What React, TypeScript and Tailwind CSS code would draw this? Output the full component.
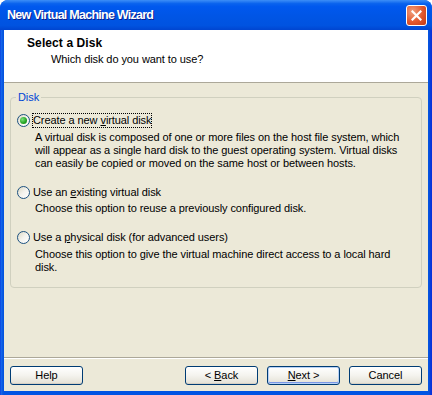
import React from "react";

const U = ({ children }: { children: React.ReactNode }) => (
  <span className="underline underline-offset-[1px]">{children}</span>
);

function Radio({ checked }: { checked?: boolean }) {
  return (
    <span className="w-[13px] h-[13px] shrink-0 rounded-full border border-[#1C5180] bg-gradient-to-br from-[#DCD9C5] via-[#F4F3EE] to-white flex items-center justify-center">
      {checked && (
        <span className="w-[7px] h-[7px] rounded-full bg-[radial-gradient(circle_at_35%_35%,#7BE07B,#21A121_60%,#1A8A1A)]" />
      )}
    </span>
  );
}

function Btn({ children, def }: { children: React.ReactNode; def?: boolean }) {
  return (
    <div
      className={
        "w-[73px] h-[19px] rounded-[3px] border border-[#003C74] flex items-center justify-center text-[11px] text-black bg-gradient-to-b from-white via-[#F4F3EE] to-[#E3E0D4] " +
        (def ? "shadow-[inset_0_0_0_1px_#B7D1F6,inset_0_-1px_0_1px_#7A97E6]" : "shadow-[inset_0_-1px_0_0_#D6D0C5]")
      }
    >
      <span className="whitespace-pre">{children}</span>
    </div>
  );
}

export default function App() {
  return (
    <div
      className="w-[432px] h-[395px] flex flex-col rounded-t-[8px] overflow-hidden bg-[#0054E3]"
      style={{ fontFamily: '"Liberation Sans", Arial, sans-serif' }}
    >
      {/* Title bar */}
      <div className="h-[30px] shrink-0 relative flex items-center bg-[linear-gradient(180deg,#3D8EF7_0%,#0A63EE_12%,#0058EE_22%,#0055E5_55%,#0053E0_85%,#0045D0_100%)]">
        <span className="ml-[7px] text-white font-bold text-[12.5px] [text-shadow:1px_1px_0_#0A1E8C] tracking-[-0.75px]">
          New Virtual Machine Wizard
        </span>
        <div className="absolute right-[5px] top-[5px] w-[21px] h-[21px] rounded-[3px] border border-white bg-[radial-gradient(circle_at_30%_30%,#F0A07E,#E2572D_55%,#C23A15)] flex items-center justify-center">
          <svg width="11" height="11" viewBox="0 0 11 11">
            <path d="M1.5 1.5 L9.5 9.5 M9.5 1.5 L1.5 9.5" stroke="white" strokeWidth="2.2" strokeLinecap="square" />
          </svg>
        </div>
      </div>

      {/* Frame */}
      <div className="flex-1 flex flex-col px-[4px] pb-[4px] bg-[linear-gradient(90deg,#0831D9_0,#166AEE_1px,#0855DD_3px,#0054E3_4px,#0054E3_428px,#0855DD_429px,#0831D9_431px)]">
        <div className="flex-1 flex flex-col bg-[#ECE9D8] text-[11px] leading-[13px] text-black tracking-[-0.08px]">
          {/* Header */}
          <div className="h-[53px] shrink-0 bg-white border-b border-[#ACA899] pt-[6px]">
            <div className="ml-[23px] font-bold text-[12px] leading-[14px] tracking-[0.1px]">Select a Disk</div>
            <div className="ml-[47px] mt-[3px]">Which disk do you want to use?</div>
          </div>

          {/* Body */}
          <div className="flex-1 px-[6px]">
            <div className="relative mt-[14px] h-[191px] rounded-[4px] border border-[#D0D0BF] pl-[6px] pt-[14px]">
              <span className="absolute left-[5px] top-[-7px] px-[2px] bg-[#ECE9D8] text-[#0046D5]">Disk</span>

              <div className="flex items-center h-[16px]">
                <Radio checked />
                <span className="ml-[2px] px-[1px] outline-1 outline-dotted outline-black -outline-offset-1 py-[1px]">
                  Create a new <U>v</U>irtual disk
                </span>
              </div>
              <div className="ml-[18px] mt-[3px]">
                A virtual disk is composed of one or more files on the host file system, which
                <br />
                will appear as a single hard disk to the guest operating system. Virtual disks
                <br />
                can easily be copied or moved on the same host or between hosts.
              </div>

              <div className="flex items-center h-[16px] mt-[14px]">
                <Radio />
                <span className="ml-[3px]">
                  Use an <U>e</U>xisting virtual disk
                </span>
              </div>
              <div className="ml-[18px] mt-[2px]">Choose this option to reuse a previously configured disk.</div>

              <div className="flex items-center h-[16px] mt-[14px]">
                <Radio />
                <span className="ml-[3px]">
                  Use a <U>p</U>hysical disk (for advanced users)
                </span>
              </div>
              <div className="ml-[18px] mt-[3px]">
                Choose this option to give the virtual machine direct access to a local hard
                <br />
                disk.
              </div>
            </div>
          </div>

          {/* Footer */}
          <div className="shrink-0">
            <div className="h-[2px] border-t border-[#ACA899] border-b border-b-white" />
            <div className="flex items-center pt-[7px] pb-[6px] px-[6px]">
              <Btn>Help</Btn>
              <div className="flex-1" />
              <Btn>
                &lt; <U>B</U>ack
              </Btn>
              <div className="w-[9px]" />
              <Btn def>
                <U>N</U>ext &gt;
              </Btn>
              <div className="w-[9px]" />
              <Btn>Cancel</Btn>
            </div>
          </div>
        </div>
      </div>
    </div>
  );
}
